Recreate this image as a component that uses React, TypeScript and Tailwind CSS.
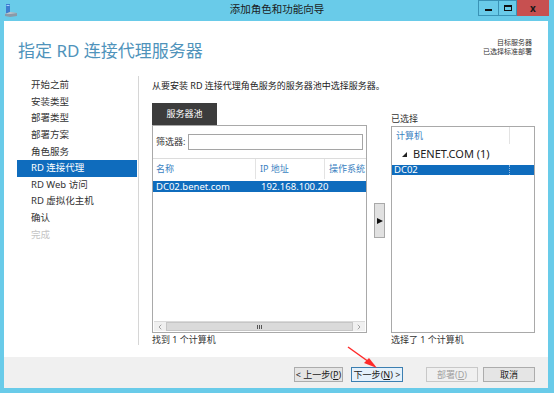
import { ChevronLeft, ChevronRight } from 'lucide-react';

const navItems = ['开始之前', '安装类型', '部署类型', '部署方案', '角色服务', 'RD 连接代理', 'RD Web 访问', 'RD 虚拟化主机', '确认', '完成'];

function WinButton({ label, keyChar, prefix = '', suffix = '', focused = false, disabled = false, w }: any) {
  return (
    <button
      className={`h-[15px] ${w} flex items-center justify-center text-[9px] border ${
        focused
          ? 'border-[#3c7fb1] bg-[#e5f1fb] text-[#1a1a1a]'
          : disabled
          ? 'border-[#c8c8c8] bg-[#f0f0f0] text-[#a2a2a2]'
          : 'border-[#acacac] bg-[#e5e5e5] text-[#1a1a1a]'
      }`}
    >
      {prefix}
      {label}(<span className="underline">{keyChar}</span>){suffix}
    </button>
  );
}

export default function App() {
  return (
    <div className="relative w-[554px] h-[393px] bg-[#69cbe9] flex flex-col overflow-hidden font-['Noto_Sans','Noto_Sans_CJK_SC',sans-serif]">
      {/* Title bar */}
      <div className="h-[21px] flex items-start relative">
        <svg width="14" height="14" viewBox="0 0 14 14" className="ml-[4px] mt-[4px]">
          <rect x="2" y="0" width="4" height="10" fill="#3d7fd0" />
          <rect x="2.5" y="1" width="3" height="1" fill="#a8d0ff" />
          <path d="M1 10 L6 8 L13 9 L13 12 L6 13 L1 12 Z" fill="#8a9aa8" />
          <path d="M6 8 L13 9 L6 10 L1 10 Z" fill="#b8c4cc" />
        </svg>
        <div className="absolute left-0 right-0 top-[2px] text-center text-[10.5px] text-[#1b1b1b] pointer-events-none">
          添加角色和功能向导
        </div>
        <div className="ml-auto mr-[5px] flex h-[16px]">
          <div className="w-[21px] h-full border border-[#3a93b6] flex items-end justify-center pb-[4px]">
            <div className="w-[7px] h-[2px] bg-[#111]" />
          </div>
          <div className="w-[18px] h-full border border-l-0 border-[#3a93b6] flex items-center justify-center">
            <div className="w-[8px] h-[6px] border border-t-2 border-[#111]" />
          </div>
          <div className="w-[32px] h-full bg-[#c75050] flex items-center justify-center text-[10px] font-bold text-[#1a1a1a] leading-none">
            x
          </div>
        </div>
      </div>

      {/* Window body */}
      <div className="flex-1 ml-[4px] mr-[6px] mb-[5px] bg-white flex flex-col">
        {/* Header */}
        <div className="h-[49px] flex items-start">
          <div className="pl-[14px] pt-[19px] text-[17px] leading-[22px] text-[#4f93bb]">指定 RD 连接代理服务器</div>
          <div className="ml-auto mr-[16px] mt-[17px] text-right text-[7px] leading-[9px] text-[#333]">
            <div>目标服务器</div>
            <div>已选择标准部署</div>
          </div>
        </div>

        {/* Main */}
        <div className="h-[287px] flex">
          <div className="w-[134px] pt-[7px]">
            {navItems.map((item, i) => (
              <div
                key={item}
                className={`ml-[13px] w-[120px] h-[16.6px] flex items-center pl-[14px] text-[9.5px] ${
                  i === 5 ? 'bg-[#0f6cbd] text-white' : i === 9 ? 'text-[#c4c4c4]' : 'text-[#333]'
                }`}
              >
                {item}
              </div>
            ))}
          </div>
          <div className="w-px mt-[6px] h-[269px] bg-[#d6d6d6]" />

          {/* Content */}
          <div className="flex-1 pl-[13px] pt-[10px]">
            <div className="text-[9px] leading-[12px] text-[#222]">从要安装 RD 连接代理角色服务的服务器池中选择服务器。</div>
            <div className="flex mt-[11px]">
              {/* Pool */}
              <div className="w-[215px] flex flex-col">
                <div className="w-[65px] h-[22px] bg-[#3c3c3c] text-white text-[9px] flex items-center justify-center">服务器池</div>
                <div className="h-[208px] border border-[#a9a9a9] flex flex-col">
                  <div className="h-[33px] flex items-center px-[3px] border-b border-[#dcdcdc]">
                    <span className="text-[9px] text-[#333] mr-[3px]">筛选器:</span>
                    <div className="flex-1 h-[16px] border border-[#a5a5a5] bg-white" />
                  </div>
                  <div className="h-[20px] flex text-[9px] text-[#3a7fc1]">
                    <div className="w-[103px] flex items-center pl-[3px] border-r border-[#e3e3e3]">名称</div>
                    <div className="w-[69px] flex items-center pl-[4px] border-r border-[#e3e3e3]">IP 地址</div>
                    <div className="flex-1 flex items-center pl-[4px] overflow-hidden whitespace-nowrap">操作系统</div>
                  </div>
                  <div className="mt-[2px] h-[11px] bg-[#0f6cbd] flex text-white text-[9.5px] leading-[11px]">
                    <div className="w-[104px] pl-[3px]">DC02.benet.com</div>
                    <div className="pl-[4px]">192.168.100.20</div>
                  </div>
                  <div className="flex-1" />
                  <div className="h-[10px] mx-px mb-px flex bg-[#f0f0f0] border-t border-[#dadada]">
                    <div className="w-[12px] flex items-center justify-center text-[#555]">
                      <ChevronLeft size={8} strokeWidth={1.5} />
                    </div>
                    <div className="flex-1 bg-[#dadada] border border-[#c6c6c6] flex items-center justify-center gap-[1px]">
                      <div className="w-px h-[4px] bg-[#555]" />
                      <div className="w-px h-[4px] bg-[#555]" />
                      <div className="w-px h-[4px] bg-[#555]" />
                    </div>
                    <div className="w-[12px] flex items-center justify-center text-[#555]">
                      <ChevronRight size={8} strokeWidth={1.5} />
                    </div>
                  </div>
                </div>
                <div className="mt-[1px] text-[9px] leading-[12px] text-[#333]">找到 1 个计算机</div>
              </div>

              {/* Add arrow */}
              <div className="ml-[7px] pt-[100px]">
                <div className="w-[11px] h-[35px] bg-[#e1e1e1] border border-[#a9a9a9] flex items-center justify-center">
                  <div className="w-0 h-0 border-y-[3.5px] border-y-transparent border-l-[6px] border-l-[#111]" />
                </div>
              </div>

              {/* Selected */}
              <div className="ml-[6px] w-[144px] flex flex-col">
                <div className="h-[23px] flex items-end pb-[1px] text-[9px] text-[#333]">已选择</div>
                <div className="h-[207px] border border-[#a9a9a9] flex flex-col">
                  <div className="h-[17px] flex text-[9px] text-[#3a7fc1]">
                    <div className="w-[118px] flex items-center pl-[4px] border-r border-[#e3e3e3]">计算机</div>
                  </div>
                  <div className="h-[21px] flex items-center pl-[10px] text-[11px] text-[#222]">
                    <div className="w-0 h-0 border-l-[5px] border-l-transparent border-b-[5px] border-b-[#222] mr-[6px]" />
                    BENET.COM (1)
                  </div>
                  <div className="h-[10px] bg-[#0f6cbd] flex text-white text-[9.5px] leading-[10px]">
                    <div className="w-[118px] pl-[2px] border-r border-dotted border-[#8fb8e0]">DC02</div>
                  </div>
                </div>
                <div className="mt-[1px] text-[9px] leading-[12px] text-[#333]">选择了 1 个计算机</div>
              </div>
            </div>
          </div>
        </div>

        {/* Footer */}
        <div className="flex-1 bg-[#f0f0f0] flex items-start pt-[10px]">
          <div className="ml-[290px] flex">
            <WinButton w="w-[49px]" prefix="< " label="上一步" keyChar="P" />
            <div className="ml-[8px]">
              <WinButton w="w-[52px]" label="下一步" keyChar="N" suffix=" >" focused />
            </div>
            <div className="ml-[23px]">
              <WinButton w="w-[52px]" label="部署" keyChar="D" disabled />
            </div>
            <div className="ml-[5px]">
              <button className="h-[15px] w-[52px] flex items-center justify-center text-[9px] border border-[#acacac] bg-[#e5e5e5] text-[#1a1a1a]">
                取消
              </button>
            </div>
          </div>
        </div>
      </div>

      {/* Red annotation arrow */}
      <svg className="absolute left-0 top-0 pointer-events-none" width="554" height="393">
        <line x1="348" y1="347" x2="369" y2="362" stroke="#ff2a2a" strokeWidth="1.5" />
        <path d="M377 368 L364 363 L369 358 Z" fill="#ff2a2a" />
      </svg>
    </div>
  );
}
